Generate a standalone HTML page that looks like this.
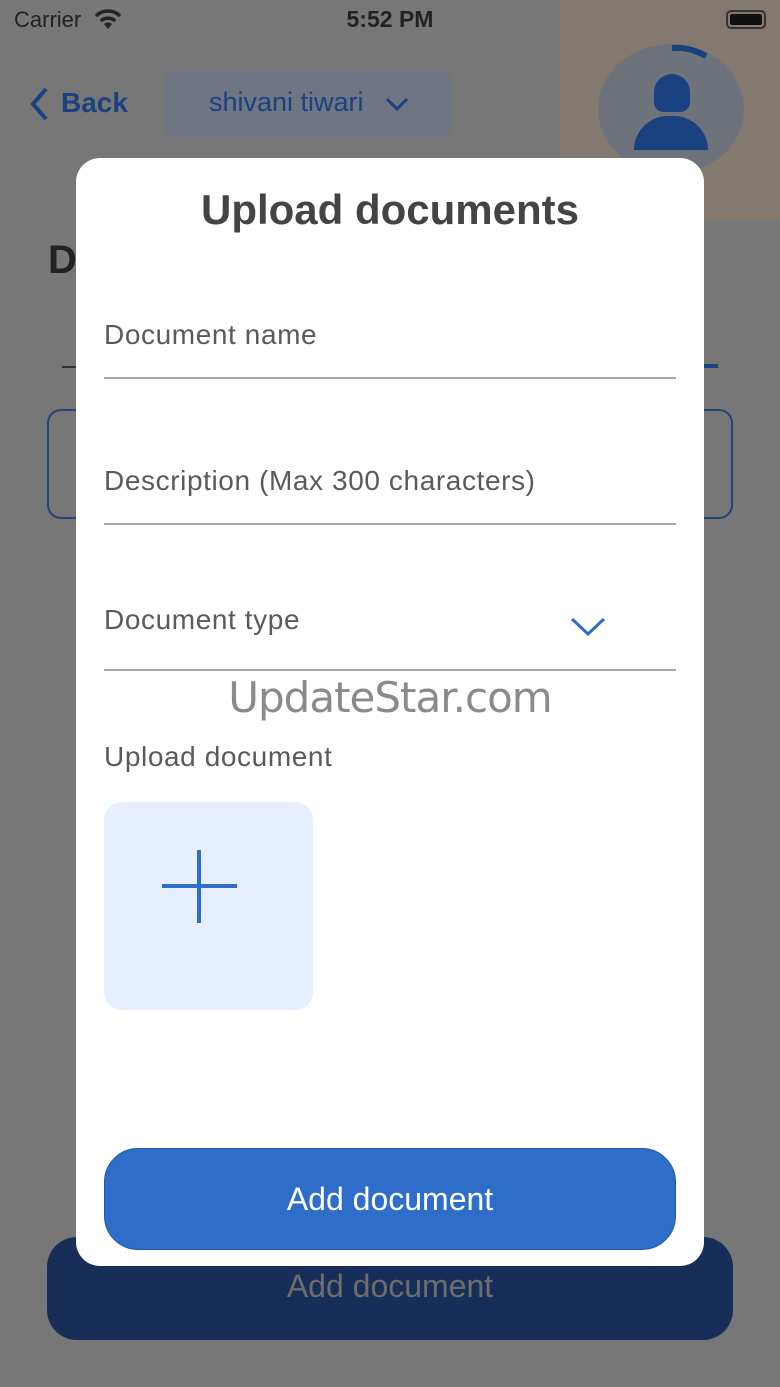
<!DOCTYPE html>
<html><head><meta charset="utf-8"><style>
*{margin:0;padding:0;box-sizing:border-box}
body{width:780px;height:1387px;overflow:hidden;background:#777;font-family:"Liberation Sans",sans-serif;position:relative}
.a{position:absolute}
.lbl{position:absolute;left:104px;font-size:28px;color:#5a5a5a;letter-spacing:0.6px}
.line{position:absolute;left:104px;width:572px;height:2px;background:#a8a8a8}
</style></head><body>
<div class="a" style="left:560px;top:0;width:220px;height:220px;background:#83796f"></div>
<div class="a" style="left:14px;top:7px;font-size:22px;color:#222">Carrier</div>
<svg class="a" style="left:94px;top:8px" width="28" height="22" viewBox="0 0 28 22"><path d="M2 8 A17 17 0 0 1 26 8" stroke="#222" stroke-width="3.5" fill="none"/><path d="M7 13 A10 10 0 0 1 21 13" stroke="#222" stroke-width="3.5" fill="none"/><path d="M14 21 L10 16 A6 6 0 0 1 18 16 Z" fill="#222"/></svg>
<div class="a" style="left:0;width:780px;top:6px;text-align:center;font-size:23px;font-weight:bold;color:#222">5:52 PM</div>
<div class="a" style="left:726px;top:10px;width:40px;height:19px;border:2px solid #333;border-radius:5px;padding:2px"><div style="width:100%;height:100%;background:#111;border-radius:2px"></div></div>
<svg class="a" style="left:28px;top:86px" width="22" height="36" viewBox="0 0 22 36"><path d="M18 3 L5 18 L18 33" stroke="#1a4180" stroke-width="4" fill="none"/></svg>
<div class="a" style="left:61px;top:87px;font-size:28px;color:#1a4180;font-weight:bold">Back</div>
<div class="a" style="left:164px;top:70px;width:288px;height:68px;border-radius:10px;background:#6f7582"></div>
<div class="a" style="left:209px;top:87px;font-size:27px;color:#1a4180">shivani tiwari</div>
<svg class="a" style="left:385px;top:96px" width="24" height="16"><path d="M2 3 L12 13 L22 3" stroke="#1a4180" stroke-width="3" fill="none"/></svg>
<div class="a" style="left:598px;top:44px;width:146px;height:130px;border-radius:50%;background:#6e727a"></div>
<svg class="a" style="left:670px;top:42px" width="40" height="20"><path d="M2 6 A60 60 0 0 1 36 14" stroke="#1a4180" stroke-width="6" fill="none"/></svg>
<div class="a" style="left:654px;top:74px;width:36px;height:38px;border-radius:18px 18px 10px 10px;background:#1a4180"></div>
<div class="a" style="left:634px;top:116px;width:74px;height:34px;border-radius:36px 36px 0 0;background:#1a4180"></div>
<div class="a" style="left:48px;top:238px;font-size:40px;font-weight:bold;color:#222">D</div>
<div class="a" style="left:62px;top:366px;width:20px;height:2px;background:#333"></div>
<div class="a" style="left:700px;top:364px;width:18px;height:4px;background:#1a4180"></div>
<div class="a" style="left:47px;top:409px;width:686px;height:110px;border:2px solid #24447a;border-radius:14px"></div>
<div class="a" style="left:47px;top:1237px;width:686px;height:103px;background:#172f58;border-radius:30px"></div>
<div class="a" style="left:0;width:780px;top:1268px;text-align:center;font-size:32px;color:#6d6d6d">Add document</div>

<div class="a" style="left:76px;top:158px;width:628px;height:1108px;background:#fff;border-radius:24px"></div>
<div class="a" style="left:76px;width:628px;top:186px;text-align:center;font-size:42px;font-weight:bold;color:#444">Upload documents</div>
<div class="lbl" style="top:319px">Document name</div>
<div class="line" style="top:377px"></div>
<div class="lbl" style="top:465px">Description (Max 300 characters)</div>
<div class="line" style="top:523px"></div>
<div class="lbl" style="top:604px">Document type</div>
<svg class="a" style="left:569px;top:615px" width="38" height="22"><path d="M3 4 L19 19 L35 4" stroke="#2f6ec8" stroke-width="3" fill="none"/></svg>
<div class="line" style="top:669px"></div>
<div class="a" style="left:0;width:780px;top:673px;text-align:center;font-size:42px;color:#8a8a8a;font-family:'DejaVu Sans',sans-serif;letter-spacing:-1px">UpdateStar.com</div>
<div class="lbl" style="top:741px">Upload document</div>
<div class="a" style="left:104px;top:802px;width:209px;height:208px;background:#e7efff;border-radius:18px"></div>
<div class="a" style="left:162px;top:884px;width:75px;height:4px;background:#2f6ec8"></div>
<div class="a" style="left:197px;top:850px;width:4px;height:73px;background:#2f6ec8"></div>
<div class="a" style="left:104px;top:1148px;width:572px;height:102px;background:#2f6ec8;border-radius:34px;border:1px solid #2456a8"></div>
<div class="a" style="left:0;width:780px;top:1181px;text-align:center;font-size:32px;color:#fff">Add document</div>
</body></html>
